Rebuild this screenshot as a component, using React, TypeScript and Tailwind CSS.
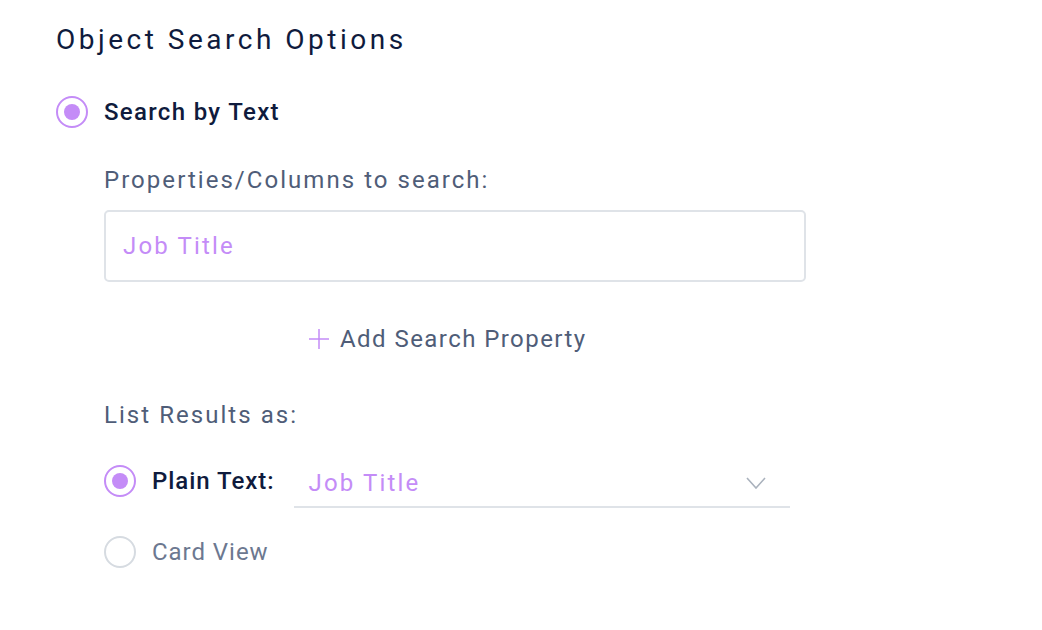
import React from "react";

function Radio({ checked }: { checked: boolean }) {
  return checked ? (
    <span className="flex h-[32px] w-[32px] shrink-0 items-center justify-center rounded-full border-2 border-[#c48cf7] bg-white">
      <span className="h-[16px] w-[16px] rounded-full bg-[#c48cf7]" />
    </span>
  ) : (
    <span className="h-[32px] w-[32px] shrink-0 rounded-full border-2 border-[#d6dbe1] bg-white" />
  );
}

export default function App() {
  return (
    <div
      className="min-h-[630px] w-[1042px] bg-white pl-[56px] pt-[22px]"
      style={{ fontFamily: "Roboto, 'Noto Sans', sans-serif" }}
    >
      <h1 className="text-[28px] leading-[36px] tracking-[0.125em] text-[#0f1b3d]">
        Object Search Options
      </h1>

      <div className="mt-[38px] flex items-center gap-[16px]">
        <Radio checked />
        <span className="text-[24px] font-medium leading-[32px] tracking-[0.055em] text-[#0f1b3d]">Search by Text</span>
      </div>

      <div className="ml-[48px] mt-[37px] flex flex-col">
        <div className="text-[24px] leading-[30px] tracking-[0.085em] text-[#4f5d78]">Properties/Columns to search:</div>
        <div className="mt-[15px] flex h-[72px] w-[702px] items-center rounded-[5px] border-2 border-[#dfe3e8] px-[17px]">
          <span className="text-[24px] tracking-[0.09em] text-[#c48cf7]">Job Title</span>
        </div>

        <div className="ml-[205px] mt-[39px] flex items-center gap-[11px]">
          <svg width="20" height="20" viewBox="0 0 20 20" className="shrink-0">
            <path d="M10 0v20M0 10h20" stroke="#c48cf7" strokeWidth="1.5" />
          </svg>
          <span className="text-[24px] tracking-[0.06em] text-[#4f5d78]">Add Search Property</span>
        </div>

        <div className="mt-[43px] text-[24px] leading-[30px] tracking-[0.085em] text-[#4f5d78]">List Results as:</div>

        <div className="mt-[23px] flex items-center">
          <Radio checked />
          <span className="ml-[16px] text-[24px] font-medium tracking-[0.04em] text-[#0f1b3d]">Plain Text:</span>
          <div className="ml-[19px] flex h-[55px] w-[496px] items-center justify-between border-b-2 border-[#dfe3e8] pl-[15px] pr-[24px] pt-[6px]">
            <span className="text-[24px] tracking-[0.09em] text-[#c48cf7]">Job Title</span>
            <svg width="20" height="12" viewBox="0 0 20 12">
              <path d="M1 1l9 10 9-10" fill="none" stroke="#aab2bd" strokeWidth="1.6" />
            </svg>
          </div>
        </div>

        <div className="mt-[26px] flex items-center">
          <Radio checked={false} />
          <span className="ml-[16px] text-[24px] tracking-[0.04em] text-[#6c7890]">Card View</span>
        </div>
      </div>
    </div>
  );
}
